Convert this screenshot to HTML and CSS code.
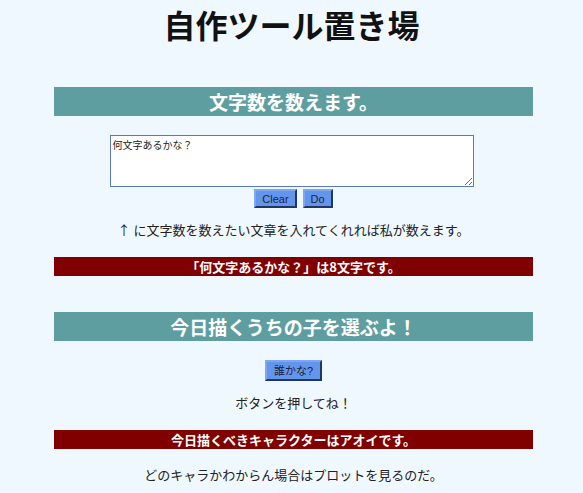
FILE: index.html
```html
<!DOCTYPE html>
<html lang="ja">
<head>
<meta charset="utf-8">
<title>自作ツール置き場</title>
<link rel="stylesheet" href="styles.css">
</head>
<body>
<h1 class="title">自作ツール置き場</h1>
<main class="wrap">
  <section class="tool tool-count">
    <h2 class="head">文字数を数えます。</h2>
    <div class="form">
      <textarea class="input">何文字あるかな？</textarea>
      <div class="buttons">
        <button class="btn">Clear</button>
        <button class="btn">Do</button>
      </div>
    </div>
    <p class="note">↑ に文字数を数えたい文章を入れてくれれば私が数えます。</p>
    <div class="result">「何文字あるかな？」は8文字です。</div>
  </section>
  <section class="tool tool-pick">
    <h2 class="head">今日描くうちの子を選ぶよ！</h2>
    <div class="buttons single">
      <button class="btn">誰かな?</button>
    </div>
    <p class="note note-pick">ボタンを押してね！</p>
    <div class="result">今日描くべきキャラクターはアオイです。</div>
    <p class="note note-last">どのキャラかわからん場合はプロットを見るのだ。</p>
  </section>
</main>
</body>
</html>
```
FILE: styles.css
```css
html, body {
  margin: 0;
  padding: 0;
}
body {
  background: #f0f8ff;
  font-family: "Noto Sans CJK JP", "Noto Sans", sans-serif;
  color: #222;
}
.title {
  margin: 0;
  padding: 0;
  height: 48px;
  line-height: 48px;
  font-size: 32px;
  font-weight: bold;
  text-align: center;
  color: #111;
}
.wrap {
  width: 479px;
  margin-left: 54px;
}
.tool {
  display: flex;
  flex-direction: column;
  align-items: center;
}
.head {
  align-self: stretch;
  margin: 0;
  height: 29px;
  line-height: 29px;
  background: #5f9ea0;
  color: #fff;
  font-size: 19px;
  font-weight: bold;
  text-align: center;
}
.tool-count .head {
  margin-top: 39px;
}
.tool-pick .head {
  margin-top: 36px;
}
.form {
  display: flex;
  flex-direction: column;
  align-items: center;
  margin-top: 19px;
}
.input {
  box-sizing: border-box;
  width: 364px;
  height: 52px;
  margin: 0 4px 0 0;
  padding: 2px;
  border: 1px solid #5a79b8;
  background: #fff;
  font-family: "Noto Sans CJK JP", sans-serif;
  font-size: 10px;
  line-height: 14px;
  color: #222;
  resize: vertical;
}
.buttons {
  display: flex;
  gap: 6px;
  margin-top: 2px;
}
.btn {
  box-sizing: border-box;
  height: 19px;
  padding: 0 6px;
  background: #6495ed;
  border: 2px outset #6a97e8;
  border-color: #7fa6f0 #3f68b5 #3f68b5 #7fa6f0;
  font-family: "Liberation Sans", "Noto Sans CJK JP", sans-serif;
  font-size: 11px;
  line-height: 14px;
  color: #1e2235;
}
.single {
  margin-top: 19px;
}
.single .btn {
  height: 21px;
  padding: 0 7px;
}
.note {
  margin: 12px 0 0;
  font-size: 13px;
  line-height: 20px;
  text-align: center;
}
.note-pick {
  margin-top: 12px;
}
.result {
  align-self: stretch;
  margin-top: 17px;
  height: 19px;
  line-height: 19px;
  background: #800000;
  color: #fff;
  font-size: 13px;
  font-weight: bold;
  text-align: center;
}
.note-last {
  margin-top: 16px;
}
```
